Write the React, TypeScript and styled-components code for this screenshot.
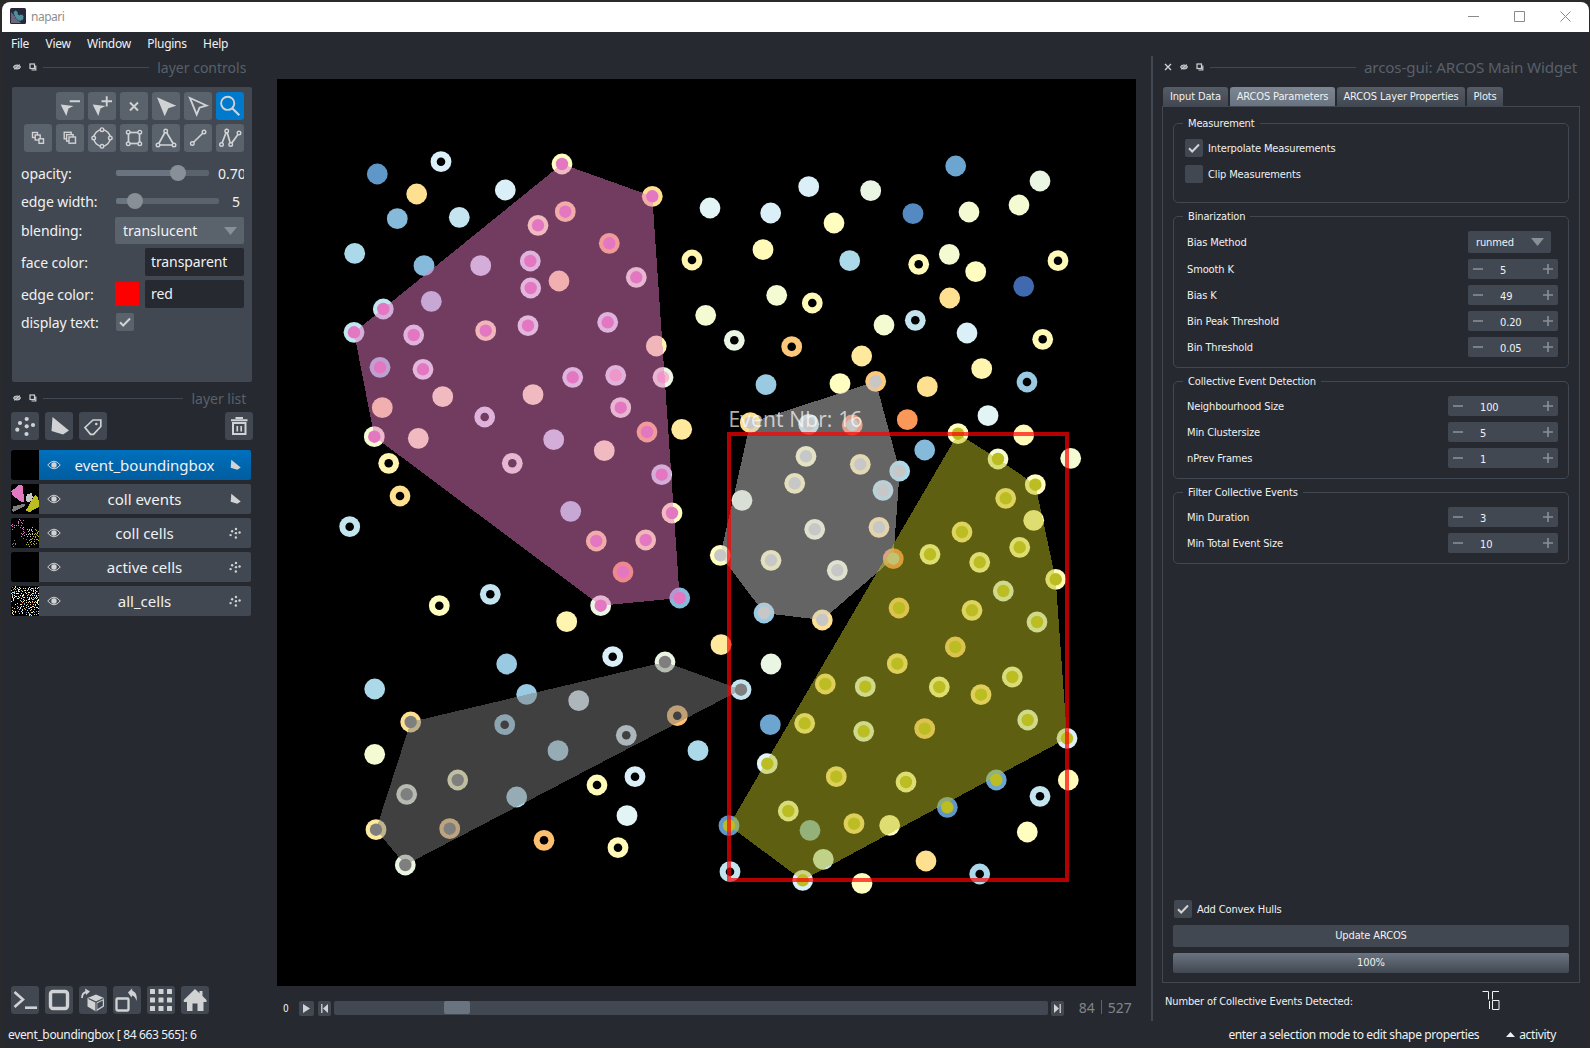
import React from "react";
import styled, { createGlobalStyle, css } from "styled-components";

const c = {
  bg: "#262930",
  fg: "#414851",
  primary: "#5a626c",
  highlight: "#6a7380",
  text: "#f0f1f2",
  icon: "#d1d2d4",
  current: "#007acc",
};

const ui = `"Noto Sans", "Open Sans", sans-serif`;
const tahoma = `"DejaVu Sans Condensed", "DejaVu Sans", sans-serif`;

const Global = createGlobalStyle`
  html, body { margin: 0; padding: 0; background: #1d1d1f; overflow: hidden; }
  * { box-sizing: border-box; }
  svg { display: block; flex: none; }
`;

/* ---------- window frame ---------- */

const Desktop = styled.div`
  width: 1590px;
  height: 1048px;
  padding: 2px 1px 1px 2px;
  background: #2b2a2b;
`;

const Window = styled.div`
  height: 1045px;
  display: flex;
  flex-direction: column;
  background: ${c.bg};
  color: ${c.text};
  border-radius: 8px;
  overflow: hidden;
  font: 12px ${ui};
  white-space: nowrap;
`;

const TitleBar = styled.header`
  height: 30px;
  flex: none;
  display: flex;
  align-items: center;
  justify-content: space-between;
  background: #fff;
  padding: 0 18px 2px 8px;
`;

const AppName = styled.div`
  display: flex;
  align-items: center;
  gap: 5px;
  color: #8e8e8e;
  font-size: 12px;
  letter-spacing: -0.5px;
`;

const WindowButtons = styled.div`
  display: flex;
  gap: 35px;
`;

const MenuBar = styled.nav`
  height: 24px;
  flex: none;
  display: flex;
  align-items: center;
  padding: 0 0 2px 9px;
  gap: 16.5px;
  letter-spacing: -0.3px;
`;

const Body = styled.div`
  flex: 1;
  display: flex;
  min-height: 0;
`;

const StatusBar = styled.footer`
  height: 25px;
  flex: none;
  display: flex;
  align-items: center;
  padding: 0 33px 0 6px;
  letter-spacing: -0.35px;
`;

const StatusHint = styled.span`
  margin-left: auto;
`;

const Activity = styled.span`
  display: flex;
  align-items: center;
  gap: 4px;
  margin-left: 27px;
`;

/* ---------- docks ---------- */

const LeftDock = styled.aside`
  width: 275px;
  flex: none;
  display: flex;
  flex-direction: column;
  padding: 1px 24px 8px 9px;
`;

const DockTitle = styled.div<{ $gap?: number; $top?: number; $size?: number }>`
  height: 20px;
  flex: none;
  display: flex;
  align-items: center;
  color: #58606a;
  font: ${(p) => p.$size ?? 14}px ${ui};
  gap: 8px;
  margin-top: ${(p) => p.$top ?? 0}px;
  padding-left: ${(p) => p.$gap ?? 2}px;
  padding-right: 3px;
`;

const DockRule = styled.i`
  flex: 1;
  height: 1px;
  margin-left: -2px;
  background: ${c.fg};
`;

const Controls = styled.section`
  width: 240px;
  height: 295px;
  margin: 10px 0 0 1px;
  padding: 5px 8px;
  background: ${c.fg};
  border-radius: 2px;
`;

const ToolGrid = styled.div`
  display: grid;
  grid-template-columns: repeat(7, 28px);
  gap: 4px;
  margin-left: 4px;
`;

const ToolButton = styled.button<{ $bg?: string; $hidden?: boolean }>`
  width: 28px;
  height: 28px;
  flex: none;
  padding: 0;
  border: 0;
  border-radius: 3px;
  background: ${(p) => p.$bg ?? c.fg};
  visibility: ${(p) => (p.$hidden ? "hidden" : "visible")};
`;

const Form = styled.div`
  display: grid;
  grid-template-columns: 95px 129px;
  grid-template-rows: 28px 28px 31px 32px 32px 24px;
  align-items: center;
  margin-top: 7px;
  font-size: 14px;
  label { padding-left: 1px; letter-spacing: -0.08px; }
`;

const Field = styled.div`
  display: flex;
  align-items: center;
  height: 28px;
  overflow: hidden;
`;

const Track = styled.div<{ $w: number; $fill: number }>`
  width: ${(p) => p.$w}px;
  height: 6px;
  margin: 0 9px 0 1px;
  flex: none;
  display: flex;
  align-items: center;
  border-radius: 2px;
  background: linear-gradient(to right, ${c.highlight} ${(p) => p.$fill}px, ${c.primary} ${(p) => p.$fill}px);
  &::after {
    content: "";
    width: 16px;
    height: 16px;
    border-radius: 50%;
    background: #898f96;
    margin-left: ${(p) => p.$fill - 8}px;
  }
`;

const Value = styled.span<{ $indent?: number }>`
  margin-left: ${(p) => p.$indent ?? 0}px;
`;

const Combo = styled.div<{ $small?: boolean }>`
  display: flex;
  align-items: center;
  justify-content: space-between;
  background: ${(p) => (p.$small ? c.fg : c.primary)};
  border-radius: 2px;
  width: ${(p) => (p.$small ? 83 : 129)}px;
  height: ${(p) => (p.$small ? 22 : 27)}px;
  padding: 0 7px 0 8px;
`;

const LineEdit = styled.div`
  width: 99px;
  height: 28px;
  line-height: 28px;
  padding-left: 6px;
  background: ${c.bg};
  border-radius: 2px;
  letter-spacing: -0.1px;
`;

const Swatch = styled.i<{ $color: string }>`
  width: 24px;
  height: 24px;
  margin-right: 6px;
  background: ${(p) => p.$color};
`;

const Box = styled.div<{ $bg?: string }>`
  width: 18px;
  height: 18px;
  flex: none;
  border-radius: 2px;
  background: ${(p) => p.$bg ?? c.fg};
`;

const ButtonRow = styled.div<{ $gap: number }>`
  display: flex;
  gap: ${(p) => p.$gap}px;
`;

const ListTools = styled(ButtonRow)`
  width: 242px;
  margin-top: 4px;
  button:last-child { margin-left: auto; }
`;

const LayerList = styled.ul`
  list-style: none;
  margin: 10px 0 auto;
  padding: 0;
  display: flex;
  flex-direction: column;
  gap: 4px;
`;

const Layer = styled.li<{ $active?: boolean }>`
  width: 240px;
  height: 30px;
  display: flex;
  align-items: center;
  font-size: 15px;
  border-radius: 2px;
  overflow: hidden;
  background: ${(p) => (p.$active ? "linear-gradient(#0070bd, #005d9f)" : c.fg)};
`;

const LayerName = styled.span`
  flex: 1;
  text-align: center;
  padding-left: 9px;
`;

/* ---------- viewer ---------- */

const Viewer = styled.main`
  width: 859px;
  flex: none;
  display: flex;
  flex-direction: column;
  padding-top: 23px;
`;

const Dims = styled.div`
  display: flex;
  align-items: center;
  height: 22px;
  margin-top: 11px;
  padding-left: 6px;
  font: 10px ${tahoma};
`;

const StepButton = styled.button<{ $w?: number }>`
  width: ${(p) => p.$w ?? 13}px;
  height: 15px;
  padding: 0;
  border: 0;
  border-radius: 2px;
  background: ${c.fg};
  display: grid;
  place-items: center;
`;

const ScrollTrack = styled.div`
  width: 714px;
  height: 14px;
  margin: 0 3px;
  border-radius: 2px;
  background: ${c.fg};
`;

const ScrollHandle = styled.div`
  width: 26px;
  height: 13px;
  margin-left: 110px;
  border-radius: 2px;
  background: ${c.highlight};
`;

const Frame = styled.span`
  display: flex;
  align-items: center;
  gap: 6px;
  margin-left: 15px;
  padding-bottom: 2px;
  color: #80868c;
  font: 14px ${ui};
  i { width: 1px; height: 14px; background: ${c.primary}; }
`;

/* ---------- plugin widget ---------- */

const Splitter = styled.i`
  width: 2px;
  flex: none;
  height: 965px;
  margin-left: 15px;
  background: ${c.fg};
`;

const RightDock = styled.aside`
  flex: 1;
  min-width: 0;
  padding: 1px 9px 0 9px;
  display: flex;
  flex-direction: column;
  font: 11px ${tahoma};
  letter-spacing: -0.13px;
`;

const Tabs = styled.div`
  display: flex;
  gap: 2px;
  margin: 10px 0 0 1px;
`;

const Tab = styled.div<{ $w: number; $active?: boolean }>`
  width: ${(p) => p.$w}px;
  height: 19px;
  line-height: 20px;
  text-align: center;
  border-radius: 3px 3px 0 0;
  background: ${(p) => (p.$active ? "linear-gradient(#7c8591, #6a7380)" : "linear-gradient(#555c66, #414851)")};
`;

const Pane = styled.div`
  width: 418px;
  height: 877px;
  border: 1px solid ${c.fg};
  padding: 10px 10px 9px;
  display: flex;
  flex-direction: column;
`;

const Group = styled.fieldset<{ $h: number; $top?: number }>`
  width: 396px;
  height: ${(p) => p.$h + 6}px;
  margin: ${(p) => p.$top ?? 0}px 0 0;
  padding: 0 10px 0 13px;
  border: 1px solid ${c.fg};
  border-radius: 5px;
  min-width: 0;
`;

const Legend = styled.legend`
  height: 13px;
  line-height: 14px;
  padding: 0 5px;
  margin-left: -4px;
`;

const Rows = styled.div<{ $top: number; $gap?: number }>`
  display: flex;
  flex-direction: column;
  gap: ${(p) => p.$gap ?? 6}px;
  margin-top: ${(p) => p.$top}px;
`;

const CheckRow = styled.label<{ $flush?: boolean }>`
  display: flex;
  align-items: center;
  gap: 5px;
  height: 18px;
  ${(p) => p.$flush && css`margin: auto 0 7px 1px;`}
  ${(p) => !p.$flush && css`margin-left: -2px;`}
`;

const SpinRow = styled.div<{ $combo?: boolean }>`
  display: flex;
  align-items: center;
  justify-content: space-between;
  height: ${(p) => (p.$combo ? 22 : 20)}px;
  padding-right: ${(p) => (p.$combo ? 7 : 0)}px;
`;

const SpinBox = styled.div<{ $w: number }>`
  width: ${(p) => p.$w}px;
  height: 20px;
  display: grid;
  grid-template-columns: 20px 1fr 20px;
  align-items: center;
  border-radius: 2px;
  background: ${c.fg};
  svg { justify-self: center; }
  span { padding: 2px 0 0 12px; }
`;

const Bar = styled.div<{ $progress?: boolean }>`
  height: ${(p) => (p.$progress ? 20 : 22)}px;
  line-height: ${(p) => (p.$progress ? 20 : 22)}px;
  text-align: center;
  border-radius: 2px;
  margin-bottom: ${(p) => (p.$progress ? 0 : 6)}px;
  background: ${(p) => (p.$progress ? "linear-gradient(#6a7380, #414851)" : c.fg)};
`;

const Detected = styled.div`
  display: flex;
  align-items: center;
  height: 20px;
  margin: 8px 0 0 3px;
  svg { margin: -2px 0 0 129px; }
`;

/* ---------- icons ---------- */

const Icon: React.FC<{ children: React.ReactNode; size?: number; box?: number; h?: number }> = ({ children, size = 28, box = 28, h }) => (
  <svg width={size} height={h ?? size} viewBox={`0 0 ${box} ${h ? (h * box) / size : box}`} fill="none" stroke={c.icon} strokeWidth="2">
    {children}
  </svg>
);

const SmallArrow = () => <path d="M4.700 12.500L17.500 14L12.500 16.500L10.300 24Z" fill={c.icon} stroke="none" />;

const Handles = ({ at }: { at: number[][] }) => (
  <g fill={c.primary} strokeWidth="1.4">
    {at.map(([x, y]) => <circle key={`${x}-${y}`} cx={x} cy={y} r="1.8" />)}
  </g>
);

const tri = [[13.7, 7], [6, 21], [22, 21]];
const poly = [[5.5, 20.5], [10.7, 7], [14.7, 20.5], [23, 9]];
const dots = [[15.7, 7], [9, 11], [22, 13], [15.7, 14.3], [6.3, 17.7], [15.5, 22]];

const tools: (React.ReactNode | null)[] = [
  null,
  <><SmallArrow /><path d="M13.7 9.3H24" strokeWidth="1.900" /></>,
  <><SmallArrow /><path d="M13.5 9.3H24M18.7 4.2V14.5" strokeWidth="1.900" /></>,
  <path d="M10 10.5L18 18.5M18 10.5L10 18.5" strokeWidth="1.900" />,
  <path d="M5 5.3L24.3 13.7L16.3 16.3L12.7 24.3Z" fill={c.icon} stroke="none" />,
  <path d="M6 6L22.5 13.5L15.5 15.7L12.7 22.5Z" strokeWidth="1.900" />,
  <><circle cx="11.7" cy="11.3" r="6.6" strokeWidth="1.9" /><path d="M16.5 16.5L23.3 23.3" strokeWidth="2.2" /></>,
  <g strokeWidth="1.4" fill={c.primary}><rect x="8.5" y="8.5" width="5" height="5" /><rect x="11.2" y="11" width="5" height="5" /><rect x="15" y="14.8" width="4.5" height="4.5" /></g>,
  <g strokeWidth="1.4" fill={c.primary}><rect x="8.2" y="8.3" width="7" height="6.5" /><rect x="10.6" y="10.6" width="6.5" height="6.5" /><rect x="13" y="13" width="6.5" height="6.2" /></g>,
  <><circle cx="14" cy="14" r="8.200" strokeWidth="1.6" /><Handles at={[[14, 5.7], [14, 22.3], [5.7, 14], [22.3, 14]]} /></>,
  <><rect x="8.5" y="8.5" width="11" height="11" strokeWidth="1.7" /><Handles at={[[8.2, 8.2], [19.8, 8.2], [8.2, 19.8], [19.8, 19.8]]} /></>,
  <><path d="M13.7 7L6 21H22Z" strokeWidth="1.7" /><Handles at={tri} /></>,
  <><path d="M8.3 19.5L20 8" strokeWidth="1.7" /><Handles at={[[8.3, 19.5], [20, 8]]} /></>,
  <><path d="M5.5 20.5L10.7 7L14.7 20.5L23 9" strokeWidth="1.7" /><Handles at={poly} /></>,
];

const PointsGlyph = () => <g fill={c.icon} stroke="none">{dots.map(([x, y]) => <circle key={y + x} cx={x} cy={y} r="2.1" />)}</g>;
const ShapeGlyph = () => <path d="M7.5 5L24 18.5L18 22.5L6.5 19Z" fill={c.icon} stroke="none" />;

const bottomIcons = [
  <><path d="M3.5 6L12 13.5L3.5 21" strokeWidth="2.6" /><path d="M14 21.7H26" strokeWidth="2.6" /></>,
  <rect x="5.5" y="5.5" width="17" height="17" rx="2.5" strokeWidth="3.4" />,
  <><path d="M17 8.5L25 12V20.5L17 25.5L8.5 20.5V12Z" fill={c.icon} stroke="none" /><path d="M9.5 12.5L17 16L24.5 12.5M17 16V25" stroke={c.fg} strokeWidth="1.2" /><path d="M18.3 17.2L23.8 14.5V19.8L18.3 23.3Z" fill={c.fg} stroke="none" /><path d="M3 12C3 8 4.500 6.500 7.500 6" strokeWidth="1.8" /><path d="M6 2.500L11 5.500L7 9Z" fill={c.icon} stroke="none" /></>,
  <><rect x="3.500" y="12.500" width="12" height="12" rx="1" strokeWidth="2.300" /><path d="M15 6.500L19 2.500L19.500 5C23 6 24.500 10 23.500 15C22.500 11.500 21.500 10 19 9.500L18.500 11.500Z" fill={c.icon} stroke="none" /></>,
  <g fill={c.icon} stroke="none">{[3, 11.5, 20].flatMap((x) => [3, 11.5, 20].map((y) => <rect key={`${x}${y}`} x={x} y={y} width="5" height="5" rx="0.6" />))}</g>,
  <path d="M14 3L18.500 7.300V5H21.500V10L25.500 14V16H22.500V25H16.500V17.500H11.500V25H6V16H2.800V14Z" fill={c.icon} stroke="none" />,
];

const Hide = () => (
  <Icon size={8} box={8}><ellipse cx="4" cy="4" rx="3.4" ry="2" strokeWidth="1" fill="#8e9297" /><path d="M1.500 6.500L6.800 1.500" strokeWidth="1" /></Icon>
);
const Float = () => (
  <Icon size={8} box={8}><rect x="1" y="1" width="4.500" height="4.500" strokeWidth="1.200" /><path d="M6.800 2.500V7H2.500" strokeWidth="1.200" /></Icon>
);
const Check = () => (
  <Icon size={18} box={18}><path d="M4 9.300L7.200 12.500L14 5.500" strokeWidth="2" /></Icon>
);
const Down = () => (
  <Icon size={13} box={13} h={8}><path d="M0 0H13L6.500 8Z" fill="#898f96" stroke="none" /></Icon>
);
const Eye = () => (
  <Icon size={14} box={14} h={10}><path d="M0.700 5Q7 -2.600 13.300 5Q7 12.600 0.700 5Z" strokeWidth="1" /><circle cx="7" cy="5" r="2.700" fill={c.icon} stroke="none" /></Icon>
);

const Logo = () => (
  <svg width="16" height="16" viewBox="0 0 16 16">
    <rect width="16" height="16" rx="1.500" fill="#29273a" />
    <path d="M1 4V15H11Z" fill="#6d6580" />
    <path d="M4 3C6 1.500 8 3 8 5.500C8 7.500 9.500 7 11 6.500C13.500 6 14.500 9 13 11.500C11.500 14 7.500 13 6 10.500C5 8.500 2.500 5.500 4 3Z" fill="#4e8f9b" stroke="#122b33" strokeWidth="0.800" strokeDasharray="1 1" />
  </svg>
);

/* ---------- cell data ---------- */

const ramp: Record<string, string> = {
  A: "#4169b0", B: "#5f97c8", b: "#5589c1", C: "#6ca5d0", D: "#85bada", E: "#9acae1", F: "#abd9e9", G: "#c4e5ef",
  H: "#daeff7", I: "#e2f4f6", J: "#eaf6e3", K: "#f4fad2", L: "#fffdc0", m: "#fffab8", M: "#fff4b0", N: "#fee99d", O: "#fee090",
  P: "#fdc87c", Q: "#fdbf70", R: "#f99858", S: "#f67b4a",
};
const group: Record<string, string> = { p: "#e377c2", q: "#f7b6d2", g: "#7f7f7f", l: "#c7c7c7", y: "#bcbd22" };

// x, y, ramp colour, then "o" for an active cell or a key of `group` for a collective one
const raw = `377.3 174 B;441 161.7 H o;416.7 194 O;397.3 218.7 D;459.3 217.3 G;505.3 190 H;354.7 253.3 F;424 265.7 D;562 164 L p;652.3 196.3 O p;
565.3 211.7 O p;538 225.3 L p;609.3 243.3 Q p;530.3 261 H p;480.7 265.7 G;530.7 288 I p;559 281 N;636.3 277.3 J p;383.3 309 G p;431.3 301.3 F;
354 332.3 G p;413.7 335 H p;485.7 330.7 M p;528 325.7 I p;607.7 322.3 H p;656.3 346 M;663 377.3 J q;615.7 375.3 H q;380 367.3 E p;423 369.3 I p;
572.7 377.3 H p;442.7 396.7 L;533 394.7 L;382.3 407.7 N;484.7 417 H o;620.7 407.7 J p;374.3 436.7 K p;418.3 438.3 L;553.7 439.7 G;647 432 Q p;
604.3 450.7 L;681.7 429.3 N;388.7 463.3 M o;512.3 463.3 J o;692 260 M o;705.7 315.3 K;710 208 I;400 496 O o;349.7 526.7 G o;490.3 594.3 G o;
439.3 605.7 L o;566.7 621.7 M;570.7 511.3 F;596.3 541 O p;645.7 540 M p;623 572 R p;661.7 474.7 G p;672 513 L p;600.7 605.7 J p;679.7 598 D p;
612.7 656.7 H o;665 662 J g;506.7 664 E;374.7 689 F;526.7 694.3 E;578.7 700.7 H;410.7 722 O g;504.7 724.7 E o;677.3 715.7 Q o;626.3 735.3 H o;
558 750.7 F;698 750.7 F;374.7 754.3 K;457.7 780 L g;406.7 794.3 J g;597 785 m o;635 776.7 H o;516.7 797 F;627 815.7 I;376 829.7 N g;
449.7 828.7 P g;544 840.3 Q o;618 847.7 m o;405.3 865 J g;955.7 166 C;1040 181 J;808.7 186.7 H;870.7 190.7 J;770.7 213 H;834 223 L;913 213.7 b;
969 212 K;1019 205 K;763 249.7 m;849.7 260.7 F;918.7 264.3 m o;949.3 254.3 K;975.7 271.7 L;1058 260.7 m o;1023.7 286.3 A;949.7 298 O;776.7 295.3 K;
812.3 303 m o;884 325 K;915.3 320.3 G o;967 333 H;734.3 340.3 J o;791.7 346.7 P o;1042.7 339.3 m o;861.7 356 N;981.7 368.7 M;766 384.7 E;
840 383.7 L;875.7 381.3 P l;927.3 386.7 O;1027 382 E o;907.3 419.7 R;988 415.7 I;750.3 422.7 O l;808.7 424.3 G l;852.3 425 S l;958 433.7 L y;
1023.7 435 m;924.7 450 D;998 459 K y;1070.7 458.3 K;806 456.3 L l;860.3 464.3 N l;899.7 471 F l;1035.3 484.7 L y;794.7 483.3 M l;883 490.3 F l;
1005.7 498.3 N y;742 500.3 J;1033.7 520.3 L;814.7 529.3 K l;879 527.3 O l;962 532 N y;1019.7 547.3 L y;720.3 555.3 L l;771 560.3 M l;837.3 570.3 K l;
893.3 558.7 S l;930 554.3 L y;979.7 562.3 L y;1055.7 579.3 m y;1003.3 591 I y;764 613 E l;822.3 620 O l;899 608 P y;972 610.3 N y;1037 622 I y;
955.3 647 P y;721 644.7 N;771 664 J;897.3 663.7 O y;1012.3 677 K y;825.3 684 O y;865.3 686.7 I y;939.3 687 L y;981 694.7 O y;741 689.7 G g;
770.3 724.7 C;804.7 723.3 N y;863.7 731.3 I y;924.7 728.7 P y;1027.7 720 I y;1067 738.3 H y;767.3 763.7 I y;836.3 776.7 O y;906 782 L y;
996.3 780 C y;1068.3 780 m;1040 796.3 G o;947.3 807.3 B y;788.3 811 K y;810 830.3 C;854 823.7 O y;889.7 825.3 L;729 825.7 B y;1027.3 832 L;
823.3 859.3 G;926 861 O;730 871.7 G o;802.7 880.3 H y;862 883.3 L;979.7 874 F o`;

const cells = raw.split(";").map((s) => {
  const [x, y, col, kind] = s.trim().split(" ");
  return { x: +x, y: +y, fill: ramp[col], kind };
});

const hulls = [
  { fill: group.p, pts: "562,164 652.3,196.3 679.7,598 600.7,605.7 374.3,436.7 354,332.3" },
  { fill: group.g, pts: "665,662 741,689.7 405.3,865 376,829.7 410.7,722" },
  { fill: group.l, pts: "875.7,381.3 899.7,471 893.3,558.7 822.3,620 764,613 720.3,555.3 750.3,422.7" },
  { fill: group.y, pts: "958,433.7 998,459 1035.3,484.7 1055.7,579.3 1067,738.3 802.7,880.3 729,825.7" },
];

const Canvas = () => (
  <svg width="859" height="907" viewBox="277 79 859 907">
    <rect x="277" y="79" width="859" height="907" fill="#000" />
    {cells.map((p, i) => (
      <g key={i}>
        <circle cx={p.x} cy={p.y} r="10.400" fill={p.fill} />
        {p.kind && <circle cx={p.x} cy={p.y} r={p.kind === "o" ? 4.3 : 6.2} fill={p.kind === "o" ? "#000" : group[p.kind]} />}
      </g>
    ))}
    <g fillOpacity="0.5" shapeRendering="crispEdges">
      {hulls.map((h) => <polygon key={h.pts} points={h.pts} fill={h.fill} />)}
    </g>
    <rect x="729" y="434" width="338" height="446" fill="none" stroke="#f00" strokeOpacity="0.7" strokeWidth="4" />
    <text x="728.500" y="426.500" fontFamily="Open Sans, sans-serif" fontSize="21" fill="#fff" fillOpacity="0.700" letterSpacing="0.150">Event Nbr: 16</text>
  </svg>
);

const Thumb = ({ kind }: { kind?: string }) => (
  <svg width="28" height="30" viewBox="350 150 710 770" shapeRendering="crispEdges">
    <rect x="300" y="100" width="900" height="900" fill="#000" />
    {kind === "hulls" && hulls.map((h) => <polygon key={h.pts} points={h.pts} fill={h.fill} />)}
    {kind === "all" && cells.map((p, i) => <rect key={i} x={p.x} y={p.y} width="27" height="27" fill={p.fill} />)}
    {kind === "coll" && cells.map((p, i) => p.kind && p.kind !== "o" && <rect key={i} x={p.x} y={p.y} width="25" height="25" fill={group[p.kind]} />)}
  </svg>
);

const layers = [
  { name: "event_boundingbox", shape: true, active: true },
  { name: "coll events", shape: true, thumb: "hulls" },
  { name: "coll cells", thumb: "coll" },
  { name: "active cells" },
  { name: "all_cells", thumb: "all" },
];

const Spin = ({ label, value, w }: { label: string; value: string; w: number }) => (
  <SpinRow>
    {label}
    <SpinBox $w={w}>
      <Icon size={10} box={10}><path d="M0 5H10" stroke="#898f96" strokeWidth="1.600" /></Icon>
      <span>{value}</span>
      <Icon size={10} box={10}><path d="M0 5H10M5 0V10" stroke="#898f96" strokeWidth="1.600" /></Icon>
    </SpinBox>
  </SpinRow>
);

export default function App() {
  return (
    <Desktop>
      <Global />
      <Window>
        <TitleBar>
          <AppName><Logo />napari</AppName>
          <WindowButtons>
            {["M0 5.500H11", "M.5 .5H10.500V10.500H.5Z", "M.5 .5L10.500 10.500M10.500 .5L.5 10.500"].map((d) => (
              <Icon key={d} size={11} box={11}><path d={d} stroke="#8a8a8a" strokeWidth="1" /></Icon>
            ))}
          </WindowButtons>
        </TitleBar>
        <MenuBar>
          <span>File</span><span>View</span><span>Window</span><span>Plugins</span><span>Help</span>
        </MenuBar>
        <Body>
          <LeftDock>
            <DockTitle><Hide /><Float /><DockRule />layer controls&nbsp;</DockTitle>
            <Controls>
              <ToolGrid>
                {tools.map((t, i) => (
                  <ToolButton key={i} $hidden={!t} $bg={i === 6 ? c.current : c.primary}><Icon>{t}</Icon></ToolButton>
                ))}
              </ToolGrid>
              <Form>
                <label>opacity:</label>
                <Field><Track $w={93} $fill={62} /><Value>0.70</Value></Field>
                <label>edge width:</label>
                <Field><Track $w={103} $fill={19} /><Value $indent={4}>5</Value></Field>
                <label>blending:</label>
                <Combo>translucent<Down /></Combo>
                <label>face color:</label>
                <Field><Swatch $color="transparent" /><LineEdit>transparent</LineEdit></Field>
                <label>edge color:</label>
                <Field><Swatch $color="#f00" /><LineEdit>red</LineEdit></Field>
                <label>display text:</label>
                <Field><Value $indent={1}><Box $bg={c.primary}><Check /></Box></Value></Field>
              </Form>
            </Controls>
            <DockTitle $top={6}><Hide /><Float /><DockRule />layer list&nbsp;</DockTitle>
            <ListTools $gap={6}>
              <ToolButton><Icon><PointsGlyph /></Icon></ToolButton>
              <ToolButton><Icon><ShapeGlyph /></Icon></ToolButton>
              <ToolButton><Icon><path d="M6 15.500L14 8H21.800V14.500L14.500 22.300H11.500Z" strokeWidth="1.700" /><circle cx="17.300" cy="12" r="1.300" fill={c.icon} stroke="none" /></Icon></ToolButton>
              <ToolButton><Icon><path d="M6 8.200H22.500M10.500 6H18" strokeWidth="2" /><rect x="8" y="11" width="12.500" height="11" strokeWidth="2" /><path d="M12.300 14V19.500M16.200 14V19.500" strokeWidth="1.700" /></Icon></ToolButton>
            </ListTools>
            <LayerList>
              {layers.map((l) => (
                <Layer key={l.name} $active={l.active}>
                  <Thumb kind={l.thumb} />
                  <Value $indent={8}><Eye /></Value>
                  <LayerName>{l.name}</LayerName>
                  <Value><Icon size={32} box={56} h={16}><g transform="translate(14 0)">{l.shape ? <ShapeGlyph /> : <PointsGlyph />}</g></Icon></Value>
                </Layer>
              ))}
            </LayerList>
            <ButtonRow $gap={6}>
              {bottomIcons.map((icon, i) => <ToolButton key={i}><Icon>{icon}</Icon></ToolButton>)}
            </ButtonRow>
          </LeftDock>

          <Viewer>
            <Canvas />
            <Dims>
              0
              <Value $indent={10}><StepButton $w={15}><Icon size={7} box={7} h={9}><path d="M0 0L7 4.500L0 9Z" fill={c.icon} stroke="none" /></Icon></StepButton></Value>
              <Value $indent={4}><StepButton><Icon size={7} box={7} h={9}><path d="M7 0L2 4.500L7 9Z" fill={c.icon} stroke="none" /><path d="M.8 0V9" strokeWidth="1.300" /></Icon></StepButton></Value>
              <ScrollTrack><ScrollHandle /></ScrollTrack>
              <StepButton><Icon size={7} box={7} h={9}><path d="M0 0L5 4.500L0 9Z" fill={c.icon} stroke="none" /><path d="M6.200 0V9" strokeWidth="1.300" /></Icon></StepButton>
              <Frame>84<i />527</Frame>
            </Dims>
          </Viewer>

          <Splitter />
          <RightDock>
            <DockTitle $gap={2} $size={15.2}>
              <Icon size={8} box={8}><path d="M1 1L7 7M7 1L1 7" strokeWidth="1.400" /></Icon>
              <Hide /><Float /><DockRule />arcos-gui: ARCOS Main Widget
            </DockTitle>
            <Tabs>
              <Tab $w={65}>Input Data</Tab>
              <Tab $w={105} $active>ARCOS Parameters</Tab>
              <Tab $w={128}>ARCOS Layer Properties</Tab>
              <Tab $w={36}>Plots</Tab>
            </Tabs>
            <Pane>
              <Group $h={80}>
                <Legend>Measurement</Legend>
                <Rows $top={9} $gap={8}>
                  <CheckRow><Box><Check /></Box>Interpolate Measurements</CheckRow>
                  <CheckRow><Box />Clip Measurements</CheckRow>
                </Rows>
              </Group>
              <Group $h={152} $top={7}>
                <Legend>Binarization</Legend>
                <Rows $top={8}>
                  <SpinRow $combo>Bias Method<Combo $small>runmed<Down /></Combo></SpinRow>
                  <Spin label="Smooth K" value="5" w={90} />
                  <Spin label="Bias K" value="49" w={90} />
                  <Spin label="Bin Peak Threshold" value="0.20" w={90} />
                  <Spin label="Bin Threshold" value="0.05" w={90} />
                </Rows>
              </Group>
              <Group $h={98} $top={7}>
                <Legend>Collective Event Detection</Legend>
                <Rows $top={8}>
                  <Spin label="Neighbourhood Size" value="100" w={110} />
                  <Spin label="Min Clustersize" value="5" w={110} />
                  <Spin label="nPrev Frames" value="1" w={110} />
                </Rows>
              </Group>
              <Group $h={72} $top={7}>
                <Legend>Filter Collective Events</Legend>
                <Rows $top={8}>
                  <Spin label="Min Duration" value="3" w={110} />
                  <Spin label="Min Total Event Size" value="10" w={110} />
                </Rows>
              </Group>
              <CheckRow $flush><Box><Check /></Box>Add Convex Hulls</CheckRow>
              <Bar>Update ARCOS</Bar>
              <Bar $progress>100%</Bar>
            </Pane>
            <Detected>
              Number of Collective Events Detected:
              <svg width="18" height="19" viewBox="0 0 18 19" fill="none" stroke={c.text} strokeWidth="1">
                <path d="M0.500 .5H6.500V8.500M7.500 10V18M17 .5H10.500V8.500M10.500 18.500V9.500H17V18.500Z" />
              </svg>
            </Detected>
          </RightDock>
        </Body>
        <StatusBar>
          event_boundingbox [ 84 663 565]: 6
          <StatusHint>enter a selection mode to edit shape properties</StatusHint>
          <Activity><Icon size={9} box={9} h={5}><path d="M0 5L4.500 0L9 5Z" fill={c.text} stroke="none" /></Icon>activity</Activity>
        </StatusBar>
      </Window>
    </Desktop>
  );
}
